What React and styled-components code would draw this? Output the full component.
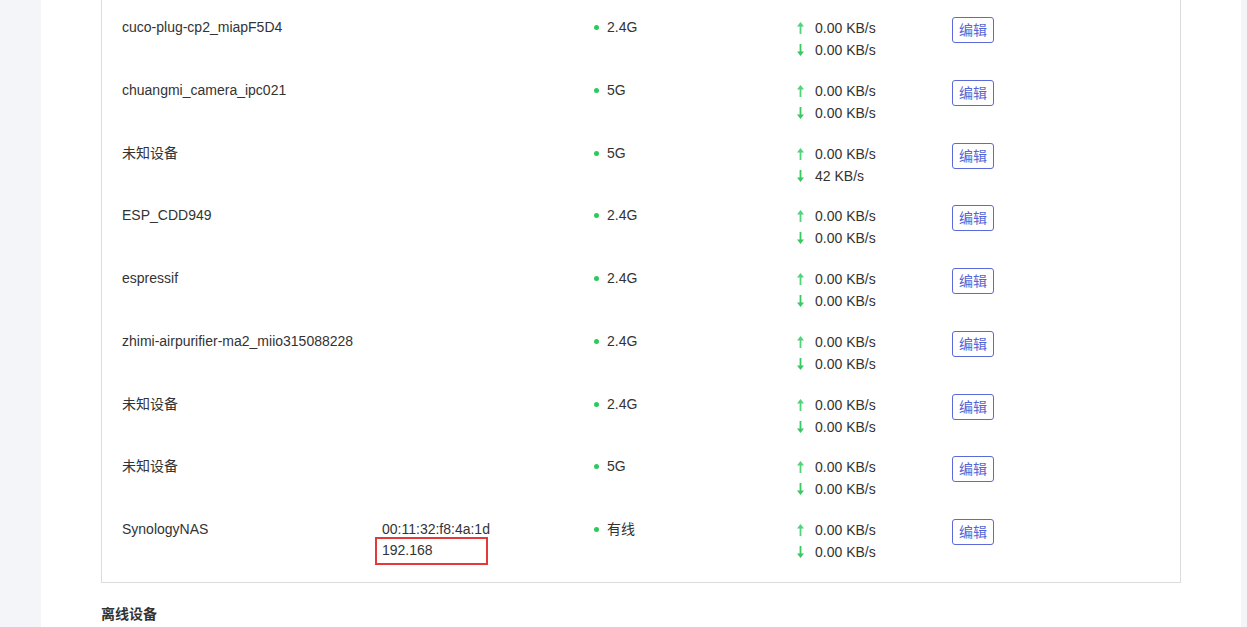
import React from 'react';
import styled, { createGlobalStyle } from 'styled-components';

const GlobalStyle = createGlobalStyle`
	html, body {
		margin: 0;
		padding: 0;
		background: #ffffff;
	}
	body {
		font-family: 'Liberation Sans', Arial, 'Noto Sans CJK SC', sans-serif;
		font-size: 14px;
		color: #333333;
	}
`;

const Page = styled.div`
	display: flex;
	height: 627px;
	overflow: hidden;
	background: #f4f5f9;
`;

const Main = styled.main`
	flex: 1;
	background: #ffffff;
	margin: 0 6px 0 41px;
	padding: 0 60px 0 60px;
`;

const DeviceBox = styled.section`
	border: 1px solid #dcdcdc;
	border-top: none;
	padding: 17px 0 19px 20px;
	display: flex;
	flex-direction: column;
	gap: 18.75px;
`;

const Row = styled.div`
	display: grid;
	grid-template-columns: 260px 212px 206px 152px 1fr;
	align-items: start;
	min-height: 44px;
	line-height: 21px;
`;

const Name = styled.div`
	line-height: 20px;
`;

const Address = styled.div`
	display: flex;
	flex-direction: column;
	line-height: 21px;
	margin-top: 0;
`;

const Ip = styled.span`
	position: relative;
	align-self: flex-start;
`;

const Marker = styled.span`
	position: absolute;
	left: -7px;
	top: -3px;
	width: 113px;
	height: 28px;
	box-sizing: border-box;
	border: 2px solid #e2393b;
`;

const Band = styled.div`
	display: flex;
	align-items: center;
	gap: 8px;
	line-height: 20px;
	&::before {
		content: '';
		width: 5px;
		height: 5px;
		border-radius: 50%;
		background: #2ec95c;
		margin-top: 1px;
	}
`;

const Speeds = styled.div`
	display: flex;
	flex-direction: column;
	line-height: 22px;
`;

const Speed = styled.div`
	display: flex;
	align-items: center;
	gap: 11px;
	margin-left: -3px;
`;

const Arrow = ({ down }) => (
	<svg width="7" height="12" viewBox="0 0 7 12" style={{ transform: down ? 'rotate(180deg)' : 'none' }}>
		<path d="M3.5 0 L7 4.5 L4.4 4.5 L4.4 12 L2.6 12 L2.6 4.5 L0 4.5 Z" fill={down ? '#39c862' : '#4fd47a'} />
	</svg>
);

const EditButton = styled.button`
	justify-self: start;
	height: 26px;
	padding: 0 6px;
	border: 1px solid #5b6ad8;
	border-radius: 3px;
	background: #ffffff;
	color: #5565d6;
	font-family: 'Liberation Sans', 'Noto Sans CJK SC', sans-serif;
	font-size: 14px;
	line-height: 22px;
	cursor: pointer;
`;

const SectionTitle = styled.h3`
	margin: 20px 0 0;
	font-size: 14px;
	font-weight: bold;
	color: #333333;
`;

const devices = [
	{ name: 'cuco-plug-cp2_miapF5D4', band: '2.4G', up: '0.00 KB/s', down: '0.00 KB/s' },
	{ name: 'chuangmi_camera_ipc021', band: '5G', up: '0.00 KB/s', down: '0.00 KB/s' },
	{ name: '未知设备', band: '5G', up: '0.00 KB/s', down: '42 KB/s' },
	{ name: 'ESP_CDD949', band: '2.4G', up: '0.00 KB/s', down: '0.00 KB/s' },
	{ name: 'espressif', band: '2.4G', up: '0.00 KB/s', down: '0.00 KB/s' },
	{ name: 'zhimi-airpurifier-ma2_miio315088228', band: '2.4G', up: '0.00 KB/s', down: '0.00 KB/s' },
	{ name: '未知设备', band: '2.4G', up: '0.00 KB/s', down: '0.00 KB/s' },
	{ name: '未知设备', band: '5G', up: '0.00 KB/s', down: '0.00 KB/s' },
	{ name: 'SynologyNAS', mac: '00:11:32:f8:4a:1d', ip: '192.168', band: '有线', up: '0.00 KB/s', down: '0.00 KB/s' },
];

const App = () => (
	<>
		<GlobalStyle />
		<Page>
			<Main>
				<DeviceBox>
					{devices.map((d, i) => (
						<Row key={i}>
							<Name>{d.name}</Name>
							<Address>
								{d.mac && <span>{d.mac}</span>}
								{d.ip && (
									<Ip>
										{d.ip}
										<Marker />
									</Ip>
								)}
							</Address>
							<Band>{d.band}</Band>
							<Speeds>
								<Speed>
									<Arrow />
									{d.up}
								</Speed>
								<Speed>
									<Arrow down />
									{d.down}
								</Speed>
							</Speeds>
							<EditButton>编辑</EditButton>
						</Row>
					))}
				</DeviceBox>
				<SectionTitle>离线设备</SectionTitle>
			</Main>
		</Page>
	</>
);

export default App;
